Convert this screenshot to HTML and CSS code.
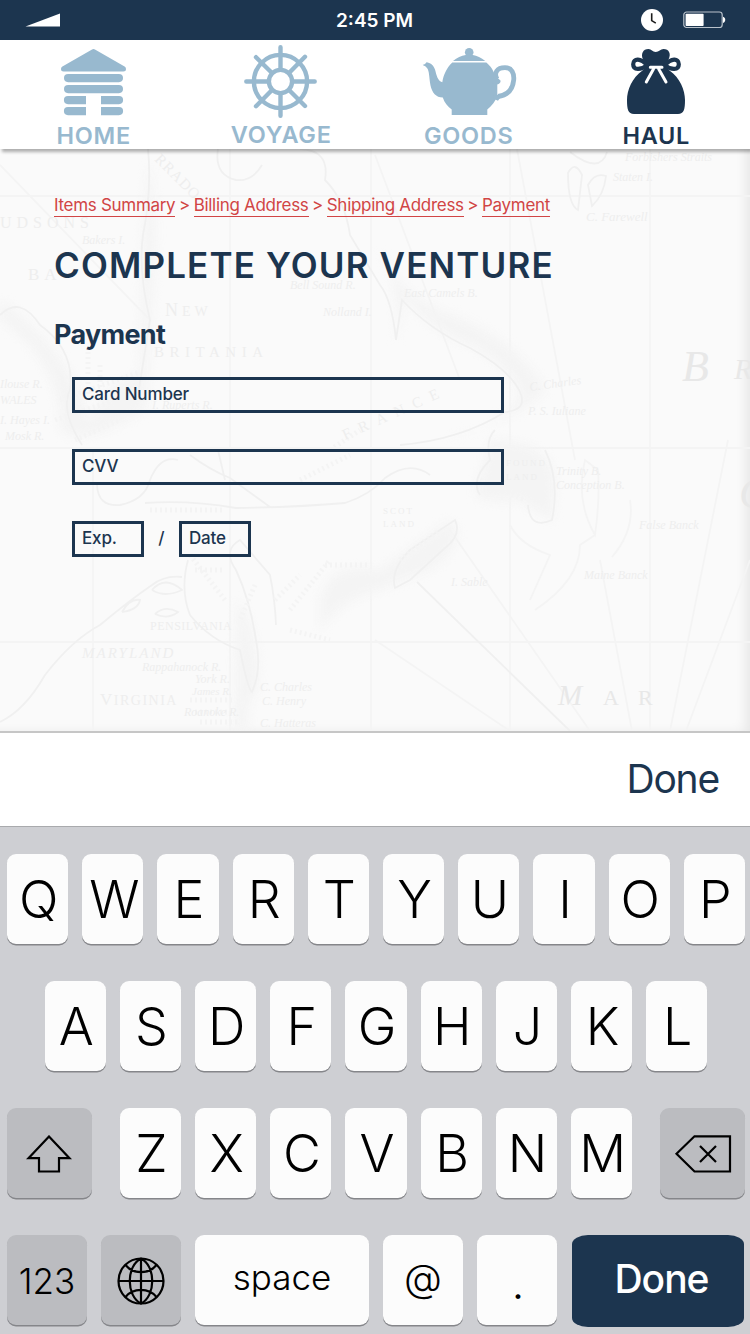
FILE: index.html
```html
<!DOCTYPE html>
<html lang="en">
<head>
<meta charset="utf-8">
<title>Complete Your Venture</title>
<link rel="stylesheet" href="styles.css">
</head>
<body>
<div class="screen">
  <header class="status">
    <svg class="status-signal" viewBox="0 0 36 14"><path d="M0.5 13.5 L35 0.5 V13.5 Z"/></svg>
    <span class="status-time">2:45 PM</span>
    <svg class="status-clock" viewBox="0 0 22 22"><circle cx="11" cy="11" r="11"/><path d="M10.7 4.2 V11.6 L14.8 14.1"/></svg>
    <svg class="status-battery" viewBox="0 0 43 18"><rect class="shell" x="0.8" y="1" width="38.4" height="15.5" rx="2.8"/><rect class="level" x="2.6" y="2.8" width="18" height="12.2" rx="0.8"/><path class="level" d="M40 5.7 C43 6.5 43 11 40 12 Z"/></svg>
  </header>

  <nav class="nav">
    <a class="tab">
      <svg class="tab-icon" viewBox="0 40 187.5 82">
        <path d="M93.5 49 Q94.2 49 95.4 49.8 L124.6 66.6 Q126 67.6 126 69 Q126 71.5 123.3 71.5 H63.6 Q61 71.5 61 69 Q61 67.6 62.4 66.6 L91.6 49.8 Q92.8 49 93.5 49 Z"/>
        <rect x="64" y="74" width="59" height="8.2" rx="4.1"/>
        <rect x="64" y="85" width="59" height="8.2" rx="4.1"/>
        <path d="M86 96 H68 A4 4 0 0 0 68 104.2 H86 Z M101 96 H119 A4 4 0 0 1 119 104.2 H101 Z"/>
        <path d="M86 107 H68 A4 4 0 0 0 68 115.2 H86 Z M101 107 H119 A4 4 0 0 1 119 115.2 H101 Z"/>
      </svg>
      <span class="tab-label">HOME</span>
    </a>
    <a class="tab tab-raised">
      <svg class="tab-icon wheel" viewBox="188 40 187.5 82">
        <circle cx="280.5" cy="81.5" r="26.6"/>
        <circle cx="280.5" cy="81.5" r="11.6"/>
        <path d="M280.5 47.3 V69 M280.5 94 V115.7 M246.3 81.5 H268 M293 81.5 H314.7 M256 57.2 L272 73 M305 56.8 L289 73 M256 106.2 L272 90 M305 106 L289 90"/>
      </svg>
      <span class="tab-label">VOYAGE</span>
    </a>
    <a class="tab">
      <svg class="tab-icon" viewBox="375 40 187.5 82">
        <circle cx="469.2" cy="52.2" r="4.3"/>
        <path d="M465.7 55 H472.8 Q479 56 485.3 60.9 H453 Q459 56 465.7 55 Z"/>
        <path d="M452.3 62.6 H486.3 C491 66.5 493 70 494.8 75 L497.3 84 V96 C495.5 101 492 106 487.3 109.5 V115 H451.7 V109.5 C447.5 106.5 444.5 103 442.8 97.6 C436 97.5 432 92.5 430.5 85.5 C429 77.5 429.5 71 427 68 Q425.8 66 422.6 65 Q425.5 64.5 426.5 62.2 C430 62.5 433.5 65 435 69.5 C436.5 75 437.5 81 442.3 82.2 C443.5 75 446.5 68 452.3 62.6 Z"/>
        <path class="handle" d="M497 79 C493.5 73 497 67.7 505 67.7 C512 67.7 514.3 73.5 513.7 80 C512.8 90 507 95.2 498 96.5"/>
        <path d="M494 73 Q496.5 78 500.5 80.5 Q501 83.5 497 84.5 L492 83 Z M494 95 L500.5 95 Q500.5 99 498 100.8 L493 98.5 Z"/>
      </svg>
      <span class="tab-label">GOODS</span>
    </a>
    <a class="tab tab-active">
      <svg class="tab-icon" viewBox="563 40 187.5 82">
        <path d="M643 59.5 C640.5 54 643 49 648.5 49 C651.5 49 652.5 52 655.7 52 C659 52 660.5 49 663.5 49 C669 49 671.5 54 668.5 59.5 L666.5 64 Q666.5 68 669.5 70.5 C680 78 685 90 685 100 C685 109 684 114 678 114 H634 C628 114 627 109 627 100 C627 90 632 78 642.5 70.5 Q645.5 68 645.5 64 Z"/>
        <path class="bow" d="M647 65.3 C641 58 633.2 58 633.2 64.2 C633.2 70.5 641 70 647 65.3 Z M665 65.3 C671 58 678.8 58 678.8 64.2 C678.8 70.5 671 70 665 65.3 Z"/>
        <path class="ribbon" d="M650.3 67.2 H662 M653.5 69 L646.3 82 M658.7 69 L666 82"/>
      </svg>
      <span class="tab-label">HAUL</span>
    </a>
  </nav>

  <main class="content">
    <svg class="map" viewBox="0 149 750 582" aria-hidden="true">
      <g class="map-grid">
        <path d="M0 196 H750 M0 448 H750 M0 642 H750 M93 448 V731 M230 149 V731 M371 149 V731 M510 149 V731 M650 149 V731"/>
        <path d="M0 165 L150 320 M375 155 L460 380 M517 149 L575 460 M728 440 L670 731 M600 560 L632 731 M450 530 L590 731 M750 560 L686 731 M375 640 L510 731"/>
      </g>
      <g class="map-shade">
        <path d="M380 250 Q400 275 396 345 Q402 300 408 300 Q430 330 470 345 Q510 365 520 395 Q500 430 440 440 Q520 420 545 390 Q520 340 440 310 Q395 290 380 250 Z"/>
        <path d="M0 300 Q70 350 90 420 Q110 380 140 375 L143 235 L148 165 Q160 200 152 300 L146 410 Q80 450 60 430 Q60 360 0 320 Z"/>
        <path d="M490 440 Q550 440 555 480 L553 520 Q530 510 520 500 Q490 505 475 495 Q485 460 490 440 Z"/>
        <path d="M320 600 Q330 560 380 570 L450 520 Q470 540 430 570 L380 590 Q340 600 320 630 Z"/>
        <path d="M238 600 Q260 630 258 690 Q245 700 248 731 H236 Q234 650 238 600 Z"/>
      </g>
      <g class="map-coast">
        <path d="M218 149 Q214 175 236 180 Q252 182 262 165 M300 149 Q330 150 325 180 Q345 200 350 235 L380 285 Q392 300 396 340 L402 300 Q430 330 470 348 Q510 370 520 392 Q528 410 505 412 Q460 440 400 445"/>
        <path d="M148 149 Q152 190 143 235 Q138 270 150 320 L138 395 M0 315 Q20 295 40 325 Q75 350 70 390 Q60 410 82 445"/>
        <path d="M97 485 Q98 507 120 505 Q145 500 150 480 Q160 455 178 460 M145 503 Q190 500 236 508 Q300 507 345 503 Q370 495 385 478 Q410 460 430 475 M190 455 Q210 470 230 478 L270 507 M218 450 L225 480"/>
        <path d="M0 722 Q25 710 45 675 Q72 640 100 625 Q130 600 152 585 Q165 575 182 577 M152 590 Q165 575 182 590 Q165 598 152 590 M122 612 Q130 598 140 600 Q138 610 122 612 M155 614 Q165 605 178 612 Q168 620 155 614"/>
        <path d="M188 560 Q180 590 190 615 Q210 640 240 650 Q248 690 252 692 Q262 670 256 640 Q250 600 236 570 Q222 550 240 540 L270 575 Q275 600 276 625"/>
        <path d="M395 588 Q390 570 410 550 Q440 530 455 520 Q462 535 445 548 L410 580 Z M480 495 Q470 480 490 460 Q485 440 495 430 M545 450 Q560 480 552 520 Q530 530 528 505 M568 173 Q575 160 582 175 L578 210 Q568 205 568 173 Z M588 185 Q595 172 606 176 Q604 195 592 206 Z M570 152 Q600 175 607 152 M417 582 L570 731"/>
        <path class="map-bank" d="M585 460 Q575 500 595 535 Q600 500 598 470 Z M630 500 Q635 530 612 557 M530 600 L550 555 Q520 545 510 525 M535 610 Q580 580 580 545 L595 535"/>
      </g>
      <g class="map-rough">
        <path d="M60 400 L140 372 M55 420 L130 395 M75 440 L120 420 M150 510 H225 M190 555 L225 600 M195 570 H225 M255 585 L240 620 M275 600 L300 575 M290 610 L330 560 M325 565 H370 M335 590 L370 575 M290 630 L330 640 M480 480 L525 500 M495 460 H535 M400 560 L440 530 M410 570 L445 540 M190 700 H235 M195 712 H235 M200 722 H240 M330 450 L360 430 M300 480 L350 455 M100 365 V390 M88 352 V400"/>
      </g>
      <g class="map-text">
        <text x="0" y="228" font-size="16" letter-spacing="5">UDSONS</text>
        <text x="28" y="280" font-size="17" letter-spacing="5">BA</text>
        <text x="165" y="316" font-size="18" letter-spacing="4">N<tspan font-size="14">EW</tspan></text>
        <text x="154" y="357" font-size="15" letter-spacing="5.5">BRITANIA</text>
        <text x="154" y="160" font-size="15" letter-spacing="1" transform="rotate(45 154 160)">RRADO</text>
        <text x="82" y="658" font-size="15" letter-spacing="2" font-style="italic">MARYLAND</text>
        <text x="150" y="630" font-size="12" letter-spacing="0.5">PENSILVANIA</text>
        <text x="100" y="705" font-size="17" letter-spacing="1.5">V<tspan font-size="14">IRGINIA</tspan></text>
        <text x="345" y="440" font-size="15" letter-spacing="9" transform="rotate(-24 345 440)">FRANCE</text>
        <text x="383" y="514" font-size="9" letter-spacing="2">SCOT</text>
        <text x="383" y="527" font-size="9" letter-spacing="2">LAND</text>
        <text x="506" y="466" font-size="9" letter-spacing="2">FOUND</text>
        <text x="506" y="480" font-size="9" letter-spacing="2">LAND</text>
        <g font-style="italic" font-size="12">
          <text x="82" y="244">Bakers I.</text>
          <text x="290" y="289">Bell Sound R.</text>
          <text x="323" y="316">Nolland I.</text>
          <text x="404" y="297">East Camels B.</text>
          <text x="625" y="161">Forbishers Straits</text>
          <text x="613" y="181">Staten I.</text>
          <text x="586" y="221" font-size="13">C. Farewell</text>
          <text x="530" y="391" transform="rotate(-8 530 391)">C. Charles</text>
          <text x="528" y="415">P. S. Iuliane</text>
          <text x="556" y="475">Trinity B.</text>
          <text x="556" y="489">Conception B.</text>
          <text x="639" y="529">False Banck</text>
          <text x="584" y="579">Maine Banck</text>
          <text x="451" y="586">I. Sable</text>
          <text x="0" y="388">Ilouse R.</text>
          <text x="0" y="404">WALES</text>
          <text x="0" y="424">I. Hayes I.</text>
          <text x="5" y="440">Mosk R.</text>
          <text x="152" y="409">I. Ruperts R.</text>
          <text x="142" y="671">Rappahanock R.</text>
          <text x="195" y="683">York R.</text>
          <text x="192" y="695" font-size="11">James R.</text>
          <text x="260" y="691">C. Charles</text>
          <text x="262" y="705">C. Henry</text>
          <text x="184" y="716">Roanoke R.</text>
          <text x="260" y="727">C. Hatteras</text>
        </g>
        <g class="map-sea">
          <text x="682" y="381" font-size="44" font-style="italic">B</text>
          <text x="734" y="379" font-size="30" font-style="italic">R</text>
          <text x="739" y="508" font-size="44" font-style="italic">C</text>
          <text x="558" y="705" font-size="29" font-style="italic">M</text>
          <text x="603" y="705" font-size="22">A</text>
          <text x="638" y="705" font-size="22">R</text>
        </g>
      </g>
    </svg>
    <div class="crumbs"><a>Items Summary</a><i>&gt;</i><a>Billing Address</a><i>&gt;</i><a>Shipping Address</a><i>&gt;</i><a>Payment</a></div>
    <h1 class="title">COMPLETE YOUR VENTURE</h1>
    <h2 class="subtitle">Payment</h2>
    <form class="form">
      <div class="field">Card Number</div>
      <div class="field">CVV</div>
      <div class="expiry">
        <div class="field field-short">Exp.</div>
        <span class="slash">/</span>
        <div class="field field-short">Date</div>
      </div>
    </form>
  </main>

  <div class="accessory"><span>Done</span></div>

  <section class="keyboard">
    <div class="row">
      <b class="key">Q</b><b class="key wide-glyph">W</b><b class="key">E</b><b class="key">R</b><b class="key">T</b><b class="key">Y</b><b class="key">U</b><b class="key">I</b><b class="key">O</b><b class="key">P</b>
    </div>
    <div class="row row-middle">
      <b class="key">A</b><b class="key">S</b><b class="key">D</b><b class="key">F</b><b class="key">G</b><b class="key">H</b><b class="key">J</b><b class="key">K</b><b class="key">L</b>
    </div>
    <div class="row row-lower">
      <b class="key key-dark key-shift"><svg class="icon-shift" viewBox="0 0 46 38"><path d="M23 1.5 L43.5 23.2 H33 V36.5 H13 V23.2 H2.5 Z"/></svg></b>
      <div class="row-letters"><b class="key">Z</b><b class="key">X</b><b class="key">C</b><b class="key">V</b><b class="key">B</b><b class="key">N</b><b class="key">M</b></div>
      <b class="key key-dark key-shift"><svg class="icon-delete" viewBox="0 0 58 38"><path d="M2.5 18.7 L20.5 1.3 H56 V36.5 H20.5 Z M26 11 L42 27 M42 11 L26 27"/></svg></b>
    </div>
    <div class="row row-bottom">
      <b class="key key-dark key-mid key-num">123</b>
      <b class="key key-dark key-mid"><svg class="icon-globe" viewBox="0 0 48 48"><circle cx="24" cy="24" r="22.5"/><path d="M24 1.5 V46.5 M1.5 24 H46.5 M24 1.5 C9 9 9 39 24 46.5 C39 39 39 9 24 1.5 M8.5 8 C16 17.5 32 17.5 39.5 8 M8.5 40 C16 30.5 32 30.5 39.5 40"/></svg></b>
      <b class="key key-space">space</b>
      <b class="key key-mid key-at">@</b>
      <b class="key key-mid key-dot">.</b>
      <b class="key key-done">Done</b>
    </div>
  </section>
</div>
</body>
</html>
```
FILE: styles.css
```css
* { box-sizing: border-box; }
body { margin: 0; }

.screen {
  width: 750px;
  height: 1334px;
  display: flex;
  flex-direction: column;
  overflow: hidden;
  background: #fafafa;
  color: #1c354f;
  font-family: Inter, Roboto, sans-serif;
}

/* Status bar */
.status {
  height: 40px;
  flex: none;
  display: flex;
  align-items: center;
  padding: 0 24px 0 25px;
  background: #1c354f;
  color: #fff;
}
.status-signal { width: 36px; height: 14px; fill: #fff; }
.status-time { margin-left: 275px; width: 80px; font-size: 19px; line-height: 40px; padding-top: 1px; font-weight: 600; white-space: nowrap; }
.status-clock { width: 22px; height: 22px; margin-left: 225px; fill: #fff; }
.status-clock path { fill: none; stroke: #1c1c1c; stroke-width: 1.6; }
.status-battery { width: 43px; height: 18px; margin-left: auto; }
.status-battery .shell { fill: none; stroke: #b9c2cb; stroke-width: 1.2; }
.status-battery .level { fill: #fff; }

/* Navigation */
.nav {
  position: relative;
  height: 109px;
  flex: none;
  display: flex;
  background: #fff;
  box-shadow: 2px 3px 3px rgba(0, 0, 0, .3);
  z-index: 1;
}
.tab { flex: 1; display: flex; flex-direction: column; align-items: center; color: #98b9cf; }
.tab-active { color: #1c354f; }
.tab-icon { width: 187.5px; height: 82px; fill: currentColor; flex: none; }
.tab-label { height: 24px; margin-top: 1px; font-size: 23.5px; line-height: 25px; font-weight: 620; letter-spacing: .75px; }
.tab-raised .tab-label { margin-top: 0; }
.wheel { fill: none; stroke: currentColor; stroke-width: 4.4px; stroke-linecap: round; }
.handle { fill: none; stroke: currentColor; stroke-width: 4.8px; }
.bow { fill: #fff; stroke: currentColor; stroke-width: 4.2px; }
.ribbon { fill: none; stroke: #fff; stroke-width: 3px; stroke-linecap: round; }

/* Page content */
.content {
  position: relative;
  z-index: 0;
  height: 582px;
  flex: none;
  padding: 45px 54px 0;
  box-shadow: inset -12px -6px 12px -8px rgba(0, 0, 0, .08);
}
.map { position: absolute; left: 0; top: 0; width: 750px; height: 582px; z-index: -1; }
.map path { fill: none; stroke: #f0f0f0; stroke-width: 1.8px; }
.map .map-grid path { stroke: #f4f4f4; }
.map .map-coast .map-bank { stroke: #f4f4f4; }
.map .map-shade { filter: blur(5px); }
.map .map-shade path { fill: #f4f4f4; stroke: none; }
.map .map-rough path { stroke: #f4f4f4; stroke-width: 5px; stroke-dasharray: 2 3; }
.map-text { fill: #eeeeee; font-family: "Liberation Serif", serif; }
.map-sea { fill: #e8e8e8; }

.crumbs { display: flex; height: 23px; font-size: 17px; line-height: 22px; color: #d14545; white-space: nowrap; }
.crumbs a { border-bottom: 1px solid #d14545; letter-spacing: -.3px; }
.crumbs i { font-style: normal; padding: 0 3.5px; }
.title { margin: 27px 0 0; font-size: 35px; line-height: 42px; font-weight: 640; letter-spacing: 1.15px; white-space: nowrap; }
.subtitle { margin: 32px 0 0; font-size: 27px; line-height: 34px; font-weight: 650; letter-spacing: -.7px; }
.form { margin: 25px 0 0 18px; display: flex; flex-direction: column; gap: 36px; }
.field {
  width: 432px;
  height: 36px;
  border: 3px solid #1c354f;
  padding-left: 7px;
  font-size: 17px;
  line-height: 28px;
  font-weight: 500;
  letter-spacing: -.15px;
}
.expiry { display: flex; }
.field-short { width: 72px; }
.slash { width: 35px; text-align: center; font-size: 17px; line-height: 34px; font-weight: 500; }

/* Input accessory bar */
.accessory {
  height: 96px;
  flex: none;
  display: flex;
  justify-content: flex-end;
  padding-right: 31px;
  background: #fff;
  border-top: 2px solid #c6c6c6;
  border-bottom: 1px solid #a9aaad;
  font-size: 39px;
  line-height: 91px;
  font-weight: 430;
  letter-spacing: -1.2px;
}

/* Keyboard */
.keyboard {
  flex: 1;
  display: flex;
  flex-direction: column;
  gap: 37px;
  padding: 27px 5px 0 7px;
  background: #cecfd3;
}
.row { height: 90px; flex: none; display: flex; gap: 13.9px; }
.row-middle { padding-left: 37.6px; }
.row-lower { justify-content: space-between; }
.row-letters { display: flex; gap: 13.9px; }
.row-bottom { gap: 14px; }
.key {
  width: 61.3px;
  height: 90px;
  flex: none;
  display: flex;
  align-items: center;
  justify-content: center;
  padding: 2px 0 0 2px;
  border-radius: 9px;
  background: #fcfcfc;
  box-shadow: 0 1.5px 0 #85868a;
  color: #000;
  font-size: 52px;
  line-height: 88px;
  font-weight: 300;
}
.key svg { fill: none; stroke: #000; stroke-width: 2.2px; }
.key-dark { background: #bbbcc0; padding-left: 0; }
.wide-glyph { letter-spacing: -1px; }
.key-shift { width: 84.5px; }
.key-mid { width: 80px; }
.key-num { font-size: 35px; font-weight: 270; }
.key-space { width: 174px; padding: 0 0 6px; font-size: 35px; }
.key-at { font-size: 39px; padding: 0 0 4px; }
.key-dot { font-size: 46px; padding: 3px 0 0 2px; }
.key-done {
  width: 172px;
  height: 92px;
  margin-left: 1px;
  padding: 0 0 4px 7px;
  border-radius: 16px / 9px;
  background: #1c354f;
  box-shadow: none;
  color: #fff;
  font-size: 39px;
  font-weight: 470;
  letter-spacing: -1px;
}
.key .icon-shift { width: 46px; height: 38px; }
.key .icon-delete { width: 58px; height: 38px; margin-left: 1px; }
.key .icon-globe { width: 48px; height: 48px; }
```
